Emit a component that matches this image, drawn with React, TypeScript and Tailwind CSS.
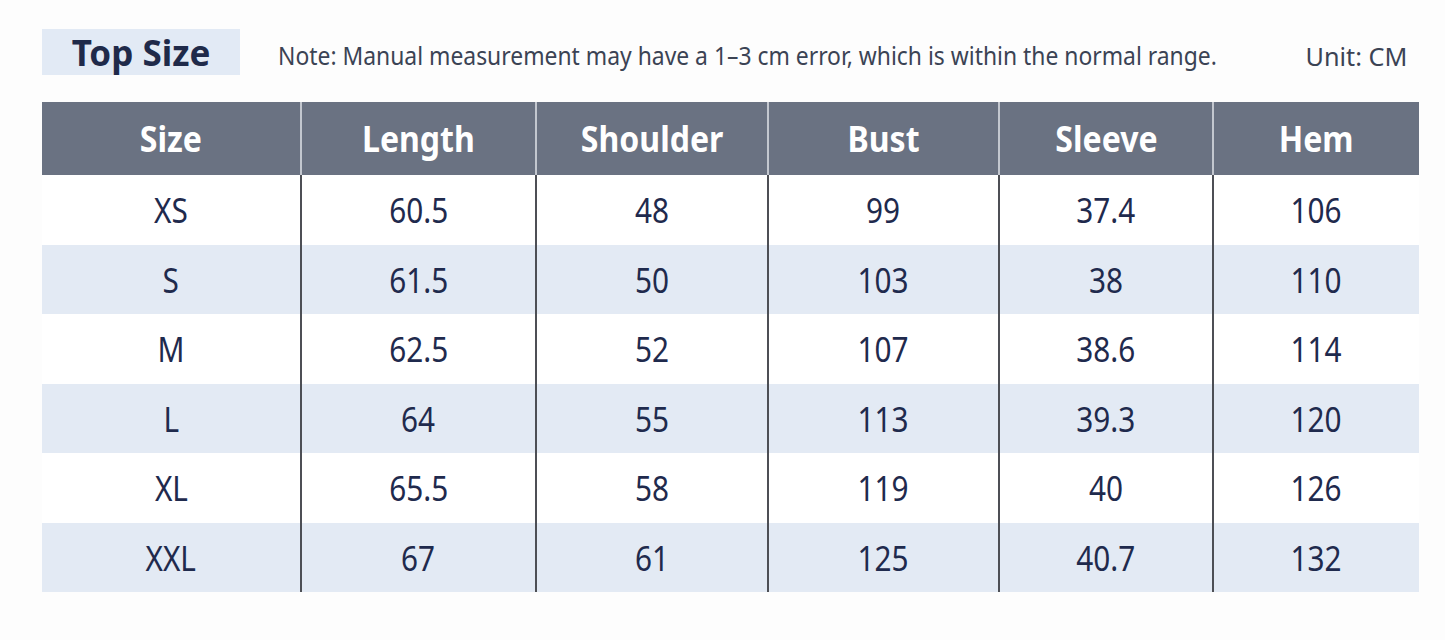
const headers = ['Size', 'Length', 'Shoulder', 'Bust', 'Sleeve', 'Hem']

const rows = [
  ['XS', '60.5', '48', '99', '37.4', '106'],
  ['S', '61.5', '50', '103', '38', '110'],
  ['M', '62.5', '52', '107', '38.6', '114'],
  ['L', '64', '55', '113', '39.3', '120'],
  ['XL', '65.5', '58', '119', '40', '126'],
  ['XXL', '67', '61', '125', '40.7', '132'],
]

const font = { fontFamily: '"Noto Sans", "Open Sans", sans-serif' }

export default function App() {
  return (
    <div className="min-h-[640px] w-[1445px] bg-[#fdfdfd] pl-[42px] pt-[29px]" style={font}>
      <div className="flex h-[46px] w-[1377px] items-center">
        <div className="flex h-[46px] w-[198px] shrink-0 items-center justify-center bg-[#e2eaf5]">
          <span className="text-[35px] font-bold leading-none text-[#1f2a4a]">Top Size</span>
        </div>
        <div className="ml-[38px] min-w-0 flex-1 pt-[8px]">
          <span className="inline-block origin-left scale-x-[0.88] text-[26px] leading-none whitespace-nowrap text-[#3b4354]">
            Note: Manual measurement may have a 1–3 cm error, which is within the normal range.
          </span>
        </div>
        <span className="inline-block shrink-0 origin-right scale-x-[0.97] pt-[8px] pr-[12px] text-[26px] leading-none whitespace-nowrap text-[#3b4354]">
          Unit: CM
        </span>
      </div>

      <div className="mt-[27px] w-[1377px]">
        <div className="grid h-[73px] grid-cols-[258px_235px_232px_231px_214px_207px] bg-[#6a7282]">
          {headers.map((h, i) => (
            <div
              key={h}
              className={`flex items-center justify-center ${i > 0 ? 'border-l-2 border-[#c3c7cf]' : ''}`}
            >
              <span className="inline-block scale-x-[0.89] text-[36px] font-bold leading-none text-white">{h}</span>
            </div>
          ))}
        </div>
        {rows.map((row, r) => (
          <div
            key={row[0]}
            className={`grid h-[69.5px] grid-cols-[258px_235px_232px_231px_214px_207px] ${r % 2 === 1 ? 'bg-[#e3eaf4]' : 'bg-white'}`}
          >
            {row.map((cell, i) => (
              <div
                key={i}
                className={`flex items-center justify-center ${i > 0 ? 'border-l-2 border-[#4d4f55]' : ''}`}
              >
                <span className="inline-block scale-x-[0.85] text-[35px] leading-none text-[#1f2a4d]">{cell}</span>
              </div>
            ))}
          </div>
        ))}
      </div>
    </div>
  )
}
